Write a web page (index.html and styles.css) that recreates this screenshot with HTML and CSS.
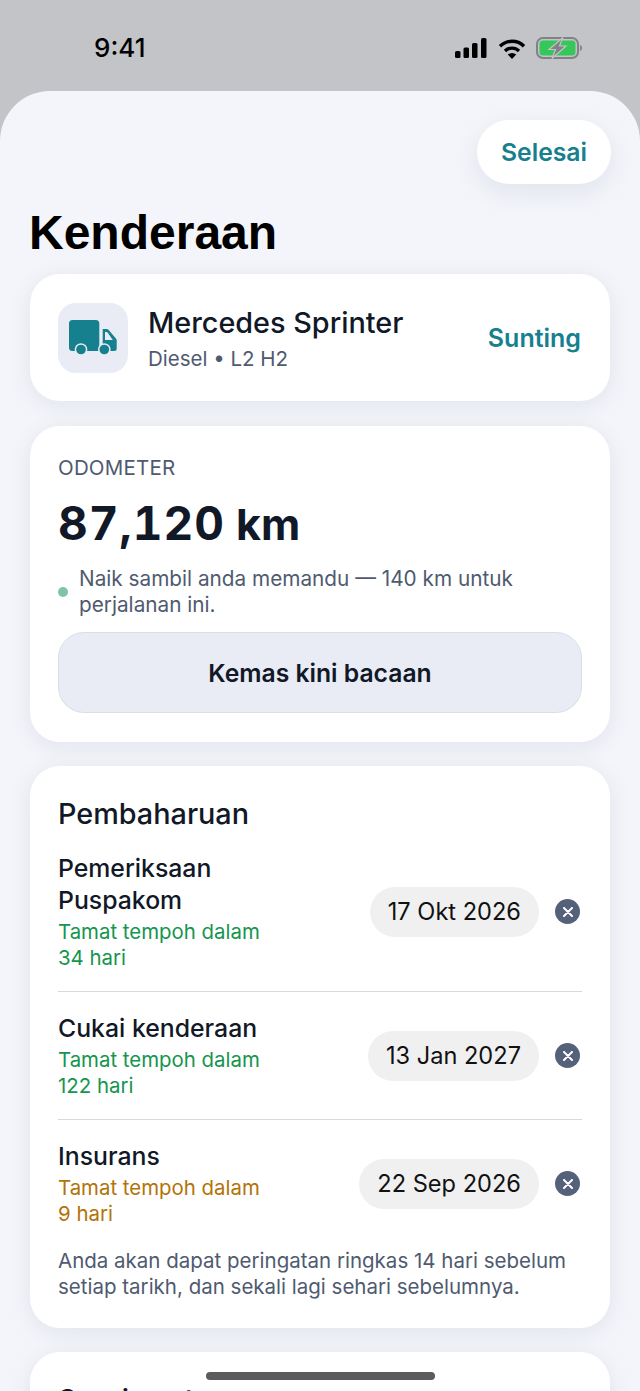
FILE: index.html
```html
<!DOCTYPE html>
<html lang="ms">
<head>
    <meta charset="UTF-8">
    <meta name="viewport" content="width=device-width, initial-scale=1.0">
    <title>Kenderaan</title>
    <link rel="stylesheet" href="styles.css">
</head>
<body>
    <div class="statusbar">
        <span class="time">9:41</span>
        <div class="status-icons">
            <svg width="34" height="20" viewBox="0 0 34 20"><rect x="1" y="13" width="5.500" height="7" rx="1.500"/><rect x="9.500" y="9.500" width="5.500" height="10.500" rx="1.500"/><rect x="18" y="5" width="5.500" height="15" rx="1.500"/><rect x="27" y="0" width="5.500" height="20" rx="1.500"/></svg>
            <svg width="28" height="21" viewBox="0 0 28 21" fill="none" stroke="#000" stroke-width="3.400"><path d="M2 8.200a17 17 0 0 1 24 0"/><path d="M7 13a10 10 0 0 1 14 0"/><path d="M14 21l-4.200-4.400a6 6 0 0 1 8.400 0z" fill="#000" stroke="none"/></svg>
            <svg width="46" height="22" viewBox="0 0 46 22"><rect x="1" y="1" width="41" height="20" rx="6" fill="none" stroke="#808285" stroke-width="2"/><rect x="3.500" y="3.500" width="36" height="15" rx="3.500" fill="#35c759"/><path d="M44 8v6c1.300-.4 2-1.600 2-3s-.7-2.600-2-3z" fill="#808285"/><path d="M27 .5L13 12.500h6.500L16 21.500 30 9h-6.500z" fill="#808285" stroke="#c3c4c8" stroke-width="1.200"/></svg>
        </div>
    </div>

    <main class="sheet">
        <div class="sheet-top">
            <button class="done-btn">Selesai</button>
        </div>
        <h1 class="page-title">Kenderaan</h1>

        <section class="card vehicle">
            <div class="vehicle-icon">
                <svg width="48" height="36" viewBox="0 0 48 36"><path d="M3.500 0h23.300a3.500 3.500 0 0 1 3.500 3.500V31H3.500A3.500 3.500 0 0 1 0 27.500v-24A3.500 3.500 0 0 1 3.500 0z" fill="#16808f"/><path d="M33.700 9h3.800c1 0 1.800.4 2.400 1.200l7 8.300c.4.500.8 1.200.8 1.800v8.200a2.500 2.500 0 0 1-2.500 2.500H33.700z" fill="#16808f"/><path d="M36 12h1.500c.5 0 .8.200 1.100.6l5.200 7.400H36z" fill="#e9ecf4"/><circle cx="12" cy="29.500" r="5.600" fill="#16808f" stroke="#e9ecf4" stroke-width="1.500"/><circle cx="35.300" cy="29.500" r="5.600" fill="#16808f" stroke="#e9ecf4" stroke-width="1.500"/></svg>
            </div>
            <div class="vehicle-text">
                <div class="vehicle-name">Mercedes Sprinter</div>
                <div class="vehicle-spec">Diesel • L2 H2</div>
            </div>
            <a class="edit-link">Sunting</a>
        </section>

        <section class="card odometer">
            <div class="odo-label">ODOMETER</div>
            <div class="odo-value"><span class="odo-num">87,120</span> <span class="odo-unit">km</span></div>
            <div class="odo-note">
                <span class="dot"></span>
                <span>Naik sambil anda memandu — 140 km untuk perjalanan ini.</span>
            </div>
            <button class="update-btn">Kemas kini bacaan</button>
        </section>

        <section class="card renewals">
            <h2 class="card-title">Pembaharuan</h2>

            <div class="renew-row">
                <div class="renew-info">
                    <div class="renew-name">Pemeriksaan Puspakom</div>
                    <div class="renew-status ok">Tamat tempoh dalam 34 hari</div>
                </div>
                <span class="date-pill">17 Okt 2026</span>
                <span class="clear-btn"><svg width="10" height="10" viewBox="0 0 10 10"><path d="M1 1l8 8M9 1l-8 8" stroke="#fff" stroke-width="2" stroke-linecap="round"/></svg></span>
            </div>

            <div class="renew-row">
                <div class="renew-info">
                    <div class="renew-name">Cukai kenderaan</div>
                    <div class="renew-status ok">Tamat tempoh dalam 122 hari</div>
                </div>
                <span class="date-pill">13 Jan 2027</span>
                <span class="clear-btn"><svg width="10" height="10" viewBox="0 0 10 10"><path d="M1 1l8 8M9 1l-8 8" stroke="#fff" stroke-width="2" stroke-linecap="round"/></svg></span>
            </div>

            <div class="renew-row">
                <div class="renew-info">
                    <div class="renew-name">Insurans</div>
                    <div class="renew-status soon">Tamat tempoh dalam 9 hari</div>
                </div>
                <span class="date-pill">22 Sep 2026</span>
                <span class="clear-btn"><svg width="10" height="10" viewBox="0 0 10 10"><path d="M1 1l8 8M9 1l-8 8" stroke="#fff" stroke-width="2" stroke-linecap="round"/></svg></span>
            </div>

            <p class="renew-foot">Anda akan dapat peringatan ringkas 14 hari sebelum setiap tarikh, dan sekali lagi sehari sebelumnya.</p>
        </section>

        <section class="card last-card">
            <h2 class="card-title">Servis seterusnya</h2>
        </section>
    </main>

    <div class="home-bar"></div>
</body>
</html>
```
FILE: styles.css
```css
html, body {
    margin: 0;
    height: 100%;
}
body {
    font-family: Inter, "Liberation Sans", sans-serif;
    background-color: #c3c4c8;
    color: #111827;
    height: 1391px;
    overflow: hidden;
}
.statusbar {
    height: 91px;
    display: flex;
    justify-content: space-between;
    align-items: flex-start;
    padding: 33px 58px 0 94px;
    box-sizing: border-box;
}
.time {
    font-size: 26px;
    line-height: 30px;
    font-weight: 500;
    color: #000;
}
.status-icons {
    display: flex;
    align-items: center;
    gap: 10px;
    margin-top: 4px;
}
.sheet {
    background-color: #f3f5fb;
    border-radius: 50px 50px 0 0;
    padding: 29px 30px 0;
    height: 1300px;
    box-sizing: border-box;
}
.sheet-top {
    display: flex;
    justify-content: flex-end;
}
.done-btn {
    height: 64px;
    width: 134px;
    margin-right: -1px;
    border: none;
    border-radius: 32px;
    background-color: #fff;
    color: #16808f;
    font-family: inherit;
    font-size: 24.750px;
    font-weight: 600;
    box-shadow: 0 8px 28px rgba(17, 24, 39, 0.08);
}
.page-title {
    font-family: "Liberation Sans", sans-serif;
    font-size: 48px;
    line-height: 56px;
    font-weight: 700;
    color: #000;
    margin: 21px 0 13px -1px;
}
.card {
    background-color: #fff;
    border-radius: 30px;
    margin-bottom: 24px;
    box-sizing: border-box;
    box-shadow: 0 4px 24px rgba(17, 24, 39, 0.08);
}
.vehicle {
    height: 127px;
    margin-bottom: 25px;
    display: flex;
    align-items: center;
    gap: 20px;
    padding: 0 29px 0 28px;
}
.vehicle-icon {
    width: 70px;
    height: 70px;
    border-radius: 18px;
    background-color: #e9ecf4;
    display: flex;
    align-items: center;
    justify-content: center;
}
.vehicle-text {
    flex: 1;
}
.vehicle-name {
    font-size: 28.800px;
    line-height: 36px;
    font-weight: 550;
    padding-top: 2px;
}
.vehicle-spec {
    font-size: 20.500px;
    line-height: 28px;
    margin-top: 4px;
    color: #4f5a70;
}
.edit-link {
    font-size: 25px;
    font-weight: 600;
    color: #16808f;
}
.odometer {
    height: 316px;
    padding: 29px 28px 0;
}
.odo-label {
    font-size: 20.500px;
    line-height: 26px;
    letter-spacing: 0.2px;
    color: #4f5a70;
}
.odo-value {
    height: 58px;
    font-size: 46px;
    line-height: 58px;
    font-weight: 700;
    margin-top: 13px;
}
.odo-num {
    font-variant-numeric: tabular-nums;
    letter-spacing: 1px;
}
.odo-unit {
    font-size: 43px;
}
.odo-note {
    display: flex;
    align-items: center;
    gap: 11px;
    font-size: 20.750px;
    line-height: 26px;
    color: #4f5a70;
    margin-top: 14px;
}
.dot {
    flex: none;
    width: 10px;
    height: 10px;
    border-radius: 50%;
    background-color: #7fc4a4;
}
.update-btn {
    display: block;
    width: 100%;
    height: 81px;
    margin-top: 14px;
    border: 1px solid #dadee8;
    border-radius: 26px;
    background-color: #e9ecf4;
    color: #111827;
    font-family: inherit;
    font-size: 24.700px;
    font-weight: 600;
}
.renewals {
    height: 562px;
    padding: 30px 28px 0;
}
.last-card {
    padding: 30px 28px 0;
    height: 200px;
}
.card-title {
    font-size: 28.800px;
    line-height: 36px;
    font-weight: 550;
    margin: 0;
}
.renew-row {
    display: flex;
    align-items: center;
    padding: 20px 0;
    border-bottom: 1px solid #d9d9dc;
}
.renew-row:nth-of-type(3) {
    border-bottom: none;
}
.renew-info {
    flex: 1;
    padding-right: 8px;
}
.renew-name {
    max-width: 225px;
    font-size: 24.800px;
    line-height: 32px;
    font-weight: 550;
}
.renew-status {
    max-width: 210px;
    font-size: 20.400px;
    line-height: 26px;
    margin-top: 3px;
}
.ok {
    color: #16954f;
}
.soon {
    color: #b27307;
}
.date-pill {
    flex: none;
    height: 50px;
    padding: 0 18px;
    display: flex;
    align-items: center;
    border-radius: 25px;
    background-color: #f0f0f1;
    font-size: 23.600px;
    color: #111;
}
.clear-btn {
    flex: none;
    width: 25px;
    height: 25px;
    margin: 0 2px 0 16px;
    border-radius: 50%;
    background-color: #55617a;
    display: flex;
    align-items: center;
    justify-content: center;
}
.renew-foot {
    font-size: 20.500px;
    line-height: 26px;
    color: #4f5a70;
    margin: 1px 0 0;
}
.home-bar {
    position: absolute;
    left: 206px;
    top: 1372px;
    width: 229px;
    height: 8px;
    border-radius: 4px;
    background-color: #5c5c5e;
}
```
